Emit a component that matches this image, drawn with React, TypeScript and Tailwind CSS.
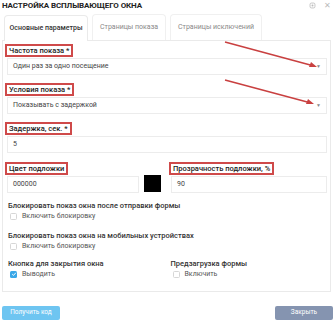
import React from "react";

const Label = ({ text }: { text: string }) => (
  <div className="flex h-[13px]">
    <span className="border-2 border-[#cf4a4a] px-[2px] text-[7.5px] leading-[9px] text-[#222] font-medium">
      {text}
    </span>
  </div>
);

const Select = ({ value }: { value: string }) => (
  <div className="mt-[1px] h-[17px] mx-[2px] border border-[#ececec] flex items-center justify-between pl-[5px] pr-[5px]">
    <span className="text-[7px] text-[#444]">{value}</span>
    <span className="text-[5px] text-[#888]">▼</span>
  </div>
);

const Input = ({ value }: { value: string }) => (
  <div className="mt-[1px] h-[17px] mx-[2px] border border-[#ececec] flex items-center pl-[5px]">
    <span className="text-[7px] text-[#444]">{value}</span>
  </div>
);

const Check = ({ text, checked }: { text: string; checked?: boolean }) => (
  <div className="flex items-center gap-[5px] h-[10px] pl-[2px]">
    {checked ? (
      <span className="w-[7px] h-[7px] rounded-[1.5px] bg-[#3aa8e8] flex items-center justify-center">
        <svg width="6" height="6" viewBox="0 0 10 10">
          <path d="M2 5.2 L4.2 7.3 L8 3" stroke="#fff" strokeWidth="1.6" fill="none" />
        </svg>
      </span>
    ) : (
      <span className="w-[7px] h-[7px] rounded-[1.5px] border border-[#d6d6d6] bg-white" />
    )}
    <span className="text-[7px] text-[#555]">{text}</span>
  </div>
);

const Heading = ({ text }: { text: string }) => (
  <div className="text-[7.5px] leading-[10px] text-[#333] font-medium">{text}</div>
);

export default function App() {
  return (
    <div
      className="relative w-[335px] h-[320px] bg-white overflow-hidden"
      style={{ fontFamily: "Roboto, 'Liberation Sans', sans-serif" }}
    >
      <div className="flex items-center justify-between h-[11px] pl-[2px] pr-[4px]">
        <span className="text-[8px] font-bold text-[#222] tracking-[-0.1px]">
          НАСТРОЙКА ВСПЛЫВАЮЩЕГО ОКНА
        </span>
        <div className="flex items-center gap-[8px] text-[#bbb]">
          <svg width="7" height="7" viewBox="0 0 10 10">
            <rect x="1.5" y="1.5" width="7" height="7" rx="2" stroke="#bbb" strokeWidth="1.2" fill="none" />
            <circle cx="5" cy="5" r="1.4" fill="#bbb" />
          </svg>
          <span className="text-[8px] leading-none">✕</span>
        </div>
      </div>

      <div className="flex items-end h-[29px] pl-[4px] gap-[4px]">
        <div className="w-[84px] h-[26px] border border-b-0 border-[#eaeaea] rounded-t-[4px] bg-white flex items-center justify-center text-[7px] text-[#333] font-medium relative top-[1px]">
          Основные параметры
        </div>
        <div className="w-[74px] h-[26px] border border-b-0 border-[#f0f0f0] rounded-t-[4px] flex items-center justify-center text-[7px] text-[#888]">
          Страницы показа
        </div>
        <div className="w-[92px] h-[26px] border border-b-0 border-[#f0f0f0] rounded-t-[4px] flex items-center justify-center text-[7px] text-[#888]">
          Страницы исключений
        </div>
      </div>

      <div className="mx-[2px] w-[329px] h-[252px] border border-[#eaeaea] pt-[3px] pl-[2px] pr-[1px]">
        <Label text="Частота показа *" />
        <Select value="Один раз за одно посещение" />
        <div className="h-[8px]" />
        <Label text="Условия показа *" />
        <Select value="Показывать с задержкой" />
        <div className="h-[8px]" />
        <Label text="Задержка, сек. *" />
        <Input value="5" />

        <div className="mt-[9px] grid grid-cols-2 gap-[4px]">
          <div>
            <Label text="Цвет подложки" />
            <div className="flex items-center gap-[3px]">
              <div className="flex-1">
                <Input value="000000" />
              </div>
              <div className="w-[17px] h-[17px] bg-black mr-[4px] relative -top-[1px]" />
            </div>
          </div>
          <div>
            <Label text="Прозрачность подложки, %" />
            <Input value="90" />
          </div>
        </div>

        <div className="mt-[8px] pl-[3px]">
          <Heading text="Блокировать показ окна после отправки формы" />
          <Check text="Включить блокировку" />
          <div className="h-[10px]" />
          <Heading text="Блокировать показ окна на мобильных устройствах" />
          <Check text="Включить блокировку" />
          <div className="h-[8px]" />
          <div className="grid grid-cols-2">
            <div>
              <Heading text="Кнопка для закрытия окна" />
              <Check text="Выводить" checked />
            </div>
            <div className="pl-[2px]">
              <Heading text="Предзагрузка формы" />
              <Check text="Включить" />
            </div>
          </div>
        </div>
      </div>

      <div className="flex justify-between items-center mt-[14px] px-[2px]">
        <div className="w-[58px] h-[14px] rounded-[2px] bg-[#6ec5f1] flex items-center justify-center text-[6.5px] text-white">
          Получить код
        </div>
        <div className="w-[58px] h-[14px] rounded-[2px] bg-[#8594b0] flex items-center justify-center text-[6.5px] text-white">
          Закрыть
        </div>
      </div>

      <svg className="absolute left-0 top-0 pointer-events-none" width="335" height="320">
        <line x1="225" y1="42" x2="314" y2="66" stroke="#c94040" strokeWidth="1.6" />
        <polygon points="317,67 309,67 311,62" fill="#c94040" />
        <line x1="225" y1="80" x2="311" y2="103" stroke="#c94040" strokeWidth="1.6" />
        <polygon points="314,104 306,104 308,99" fill="#c94040" />
      </svg>
    </div>
  );
}
